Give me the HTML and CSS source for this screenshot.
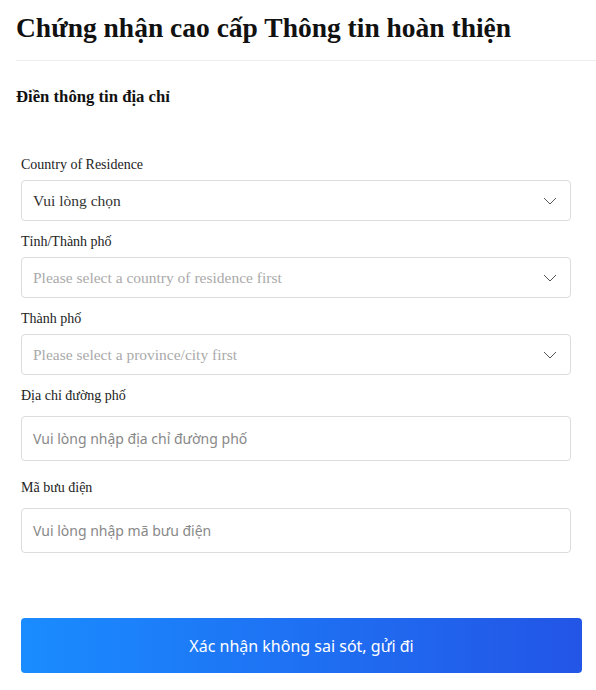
FILE: index.html
```html
<!DOCTYPE html>
<html lang="vi">
<head>
<meta charset="utf-8">
<link rel="stylesheet" href="styles.css">
</head>
<body>
<div class="page">
  <header class="head">
    <h1 class="title">Chứng nhận cao cấp Thông tin hoàn thiện</h1>
  </header>
  <h2 class="section">Điền thông tin địa chỉ</h2>
  <form class="form">
    <div class="field">
      <div class="label">Country of Residence</div>
      <div class="select">
        <span class="value">Vui lòng chọn</span>
        <svg class="chev" width="14" height="8" viewBox="0 0 14 8"><path d="M1 1 L7 7 L13 1" fill="none" stroke="#555" stroke-width="1"/></svg>
      </div>
    </div>
    <div class="field">
      <div class="label">Tỉnh/Thành phố</div>
      <div class="select">
        <span class="value ph">Please select a country of residence first</span>
        <svg class="chev" width="14" height="8" viewBox="0 0 14 8"><path d="M1 1 L7 7 L13 1" fill="none" stroke="#555" stroke-width="1"/></svg>
      </div>
    </div>
    <div class="field">
      <div class="label">Thành phố</div>
      <div class="select">
        <span class="value ph">Please select a province/city first</span>
        <svg class="chev" width="14" height="8" viewBox="0 0 14 8"><path d="M1 1 L7 7 L13 1" fill="none" stroke="#555" stroke-width="1"/></svg>
      </div>
    </div>
    <div class="field field-text">
      <div class="label">Địa chỉ đường phố</div>
      <div class="input"><span class="iph">Vui lòng nhập địa chỉ đường phố</span></div>
    </div>
    <div class="field field-text">
      <div class="label">Mã bưu điện</div>
      <div class="input"><span class="iph">Vui lòng nhập mã bưu điện</span></div>
    </div>
    <div class="actions">
      <button type="button" class="submit">Xác nhận không sai sót, gửi đi</button>
    </div>
  </form>
</div>
</body>
</html>
```
FILE: styles.css
```css
html, body {
  margin: 0;
  padding: 0;
  background: #fff;
}
body {
  font-family: "Liberation Serif", "Times New Roman", serif;
  color: #111;
  overflow: hidden;
}
.page {
  padding-left: 16px;
}
.head {
  border-bottom: 1px solid #eeeeee;
  padding-top: 12px;
  height: 61px;
  box-sizing: border-box;
}
.title {
  margin: 0;
  font-size: 27.5px;
  line-height: 32px;
  font-weight: bold;
  color: #111;
  white-space: nowrap;
}
.section {
  margin: 26px 0 0 0;
  font-size: 16.7px;
  line-height: 20px;
  font-weight: bold;
  color: #111;
}
.form {
  padding-left: 5px;
  margin-top: 49px;
}
.field {
  width: 550px;
}
.label {
  font-size: 14px;
  line-height: 18px;
  color: #222;
  margin-bottom: 6px;
}
.select {
  height: 41px;
  box-sizing: border-box;
  border: 1px solid #dcdcdc;
  border-radius: 4px;
  display: flex;
  align-items: center;
  justify-content: space-between;
  padding: 0 13px 0 11px;
  margin-bottom: 12px;
}
.value {
  font-size: 15.5px;
  color: #333;
}
.value.ph {
  color: #aaa;
}
.chev {
  display: block;
}
.field-text .label {
  margin-bottom: 11px;
}
.input {
  height: 45px;
  box-sizing: border-box;
  border: 1px solid #dcdcdc;
  border-radius: 4px;
  display: flex;
  align-items: center;
  padding: 0 11px;
  margin-bottom: 18px;
}
.iph {
  font-family: "Noto Sans", Roboto, sans-serif;
  font-size: 14px;
  color: #888;
}
.actions {
  padding-top: 47px;
}
.submit {
  display: block;
  width: 561px;
  height: 55px;
  border: 0;
  border-radius: 4px;
  background: linear-gradient(90deg, #1a8cff 0%, #2355e6 100%);
  color: #fff;
  font-family: "Noto Sans", Roboto, sans-serif;
  font-size: 16px;
  padding: 0;
}
```
